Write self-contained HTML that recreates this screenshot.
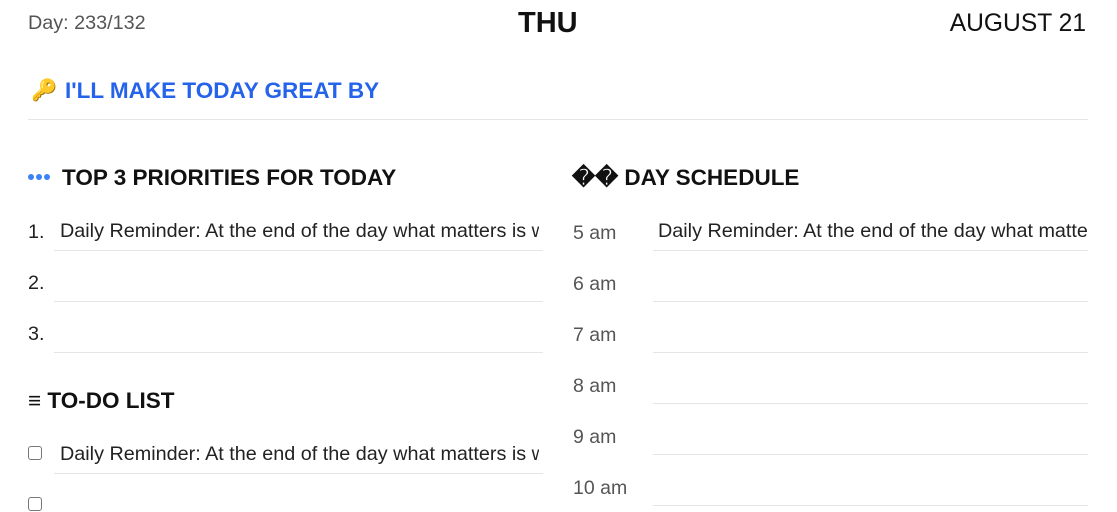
<!DOCTYPE html>
<html><head><meta charset="utf-8"><style>
body{margin:0;width:1117px;height:512px;overflow:hidden;background:#fff;font-family:"Liberation Sans",Arial,sans-serif;color:#111;position:relative}
.a{position:absolute;white-space:nowrap}
.line{position:absolute;height:1px;background:#e5e5e5}
.t{font-size:19.8px;color:#222}
.h{font-size:22.5px;font-weight:bold;color:#111}
.tm{font-size:19.5px;color:#555}
.cb{position:absolute;width:14px;height:14px;border:1.5px solid #777;border-radius:3px;box-sizing:border-box}
.clip{overflow:hidden}
.dot{position:absolute;width:6px;height:6px;border-radius:50%;background:#3b82f6;top:174px}
</style></head><body>
<div class="a" style="left:28px;top:12px;font-size:19.8px;color:#555">Day: 233/132</div>
<div class="a" style="left:518px;top:7px;font-size:29px;font-weight:bold">THU</div>
<div class="a" style="right:31px;top:10px;font-size:24.6px;color:#111">AUGUST 21</div>

<div class="a" style="left:31px;top:79px;font-size:21px">🔑</div>
<div class="a" style="left:65px;top:78px;font-size:22.5px;font-weight:bold;color:#2563eb">I'LL MAKE TODAY GREAT BY</div>
<div class="line" style="left:28px;top:119px;width:1060px"></div>

<div class="dot" style="left:28px"></div><div class="dot" style="left:36px"></div><div class="dot" style="left:44px"></div>
<div class="a h" style="left:62px;top:165px">TOP 3 PRIORITIES FOR TODAY</div>
<div class="a t" style="left:28px;top:221px">1.</div>
<div class="a t clip" style="left:60px;top:220px;width:479px">Daily Reminder: At the end of the day what matters is what you did</div>
<div class="line" style="left:54px;top:250px;width:489px"></div>
<div class="a t" style="left:28px;top:272px">2.</div>
<div class="line" style="left:54px;top:301px;width:489px"></div>
<div class="a t" style="left:28px;top:323px">3.</div>
<div class="line" style="left:54px;top:352px;width:489px"></div>

<div class="a h" style="left:28px;top:388px">≡ TO-DO LIST</div>
<div class="cb" style="left:28px;top:446px"></div>
<div class="a t clip" style="left:60px;top:443px;width:479px">Daily Reminder: At the end of the day what matters is what you did</div>
<div class="line" style="left:54px;top:473px;width:489px"></div>
<div class="cb" style="left:28px;top:497px"></div>

<div class="a h" style="left:572px;top:165px">�� DAY SCHEDULE</div>
<div class="a tm" style="left:573px;top:222px">5 am</div>
<div class="a t clip" style="left:658px;top:220px;width:430px">Daily Reminder: At the end of the day what matters is what you did</div>
<div class="line" style="left:653px;top:250px;width:435px"></div>
<div class="a tm" style="left:573px;top:273px">6 am</div>
<div class="line" style="left:653px;top:301px;width:435px"></div>
<div class="a tm" style="left:573px;top:324px">7 am</div>
<div class="line" style="left:653px;top:352px;width:435px"></div>
<div class="a tm" style="left:573px;top:375px">8 am</div>
<div class="line" style="left:653px;top:403px;width:435px"></div>
<div class="a tm" style="left:573px;top:426px">9 am</div>
<div class="line" style="left:653px;top:454px;width:435px"></div>
<div class="a tm" style="left:573px;top:477px">10 am</div>
<div class="line" style="left:653px;top:505px;width:435px"></div>
</body></html>
